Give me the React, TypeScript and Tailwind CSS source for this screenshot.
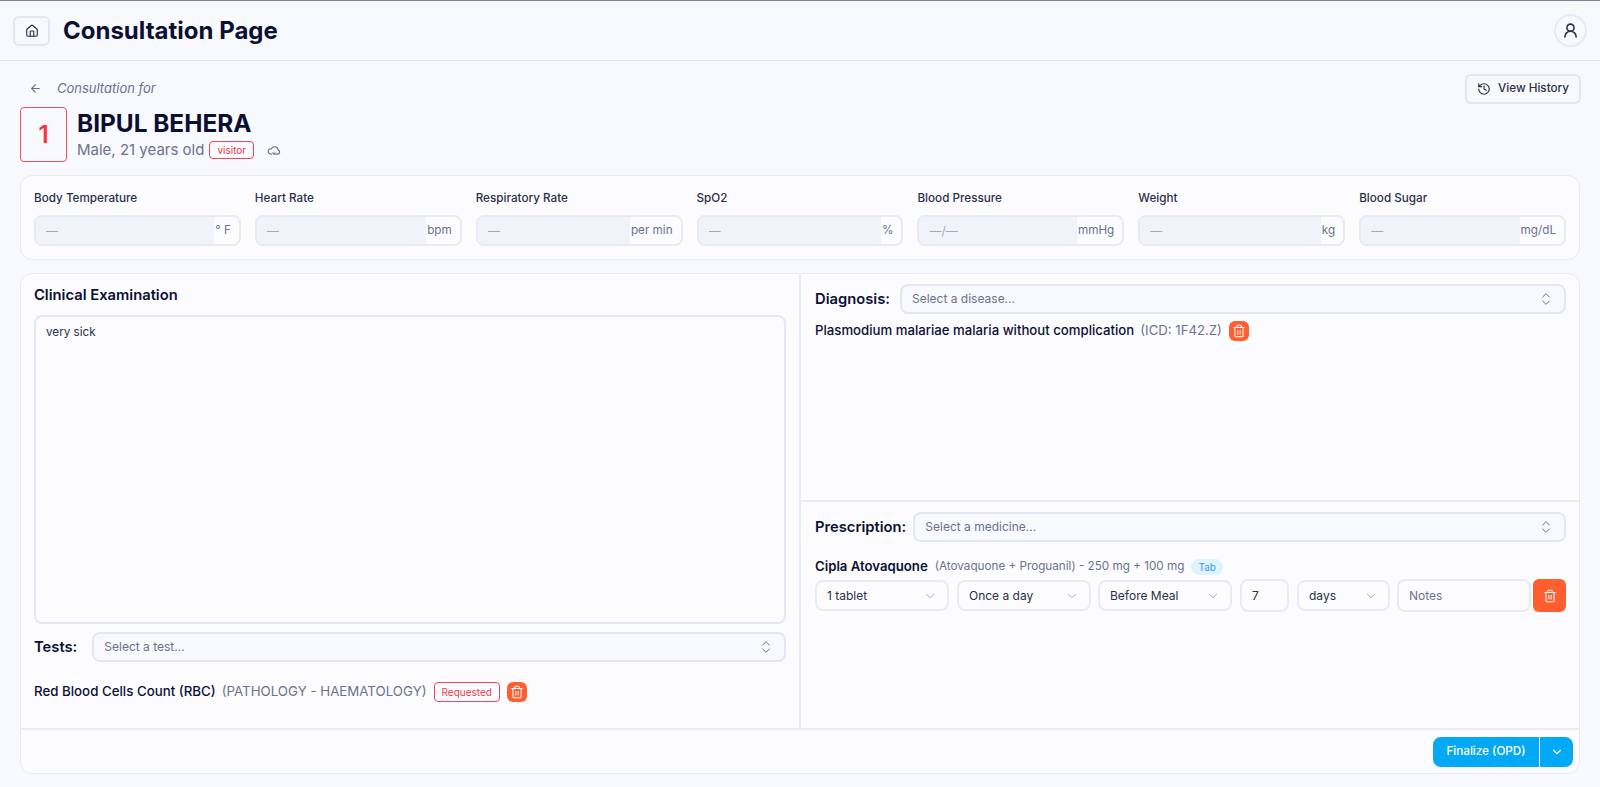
import { ArrowLeft, ChevronDown, ChevronsUpDown, History, House, Trash2, UserRound } from 'lucide-react';

const VITALS = [
  { label: 'Body Temperature', placeholder: '—', unit: '° F' },
  { label: 'Heart Rate', placeholder: '—', unit: 'bpm' },
  { label: 'Respiratory Rate', placeholder: '—', unit: 'per min' },
  { label: 'SpO2', placeholder: '—', unit: '%' },
  { label: 'Blood Pressure', placeholder: '—/—', unit: 'mmHg' },
  { label: 'Weight', placeholder: '—', unit: 'kg' },
  { label: 'Blood Sugar', placeholder: '—', unit: 'mg/dL' },
];

function Combo({ text, className }: { text: string; className?: string }) {
  return (
    <button className={`flex h-[30px] items-center justify-between rounded-lg border-2 border-[#e4e7f2] bg-[#f8f9fc] pl-[10px] pr-[10px] text-xs text-[#6b7190] ${className ?? ''}`}>
      <span>{text}</span>
      <ChevronsUpDown className="h-4 w-4 text-[#6b7190]" strokeWidth={1.5} />
    </button>
  );
}

function Dropdown({ text, className }: { text: string; className?: string }) {
  return (
    <button className={`flex h-[31px] items-center justify-between rounded-lg border-2 border-[#e8eaf4] bg-[#fcfcfe] pl-[10px] pr-[10px] text-xs text-[#2a2f4a] ${className ?? ''}`}>
      <span>{text}</span>
      <ChevronDown className="h-[14px] w-[14px] text-[#9a9fb5]" strokeWidth={1.5} />
    </button>
  );
}

function TrashButton({ className }: { className?: string }) {
  return (
    <button className={`flex items-center justify-center rounded-md bg-[#ff5f2e] text-white ${className ?? ''}`}>
      <Trash2 className="h-[14px] w-[14px]" strokeWidth={1.75} />
    </button>
  );
}

export default function App() {
  return (
    <div className="flex h-[787px] w-[1600px] flex-col overflow-hidden border-t border-[#85839a] bg-[#f8f9fc] font-['Inter',sans-serif] text-[#0b1033]">
      {/* Header */}
      <header className="flex h-[60px] shrink-0 items-center justify-between border-b border-[#e4e7f0] pl-[13px] pr-[13px]">
        <div className="flex items-center gap-[13px]">
          <button className="flex h-[30px] w-[37px] items-center justify-center rounded-md border-2 border-[#e4e7f2] bg-[#f8f9fc]">
            <House className="h-[14px] w-[14px] text-[#2a2f4a]" strokeWidth={2} />
          </button>
          <h1 className="text-2xl font-bold">Consultation Page</h1>
        </div>
        <button className="flex h-[33px] w-[33px] items-center justify-center rounded-full border-2 border-[#e8eaf4]">
          <UserRound className="h-[17px] w-[17px] text-[#2a2f4a]" strokeWidth={2.25} />
        </button>
      </header>

      <main className="flex min-h-0 flex-1 flex-col px-5 pt-3">
        {/* Patient */}
        <div className="flex justify-between">
          <div>
            <div className="flex h-[31px] items-center gap-[15px] pl-[9px]">
              <ArrowLeft className="h-[13px] w-[13px] text-[#6b7190]" strokeWidth={2} />
              <span className="text-[13px] italic text-[#6b7190]">Consultation for</span>
            </div>
            <div className="mt-[3px] flex gap-[10px]">
              <div className="flex h-[55px] w-[47px] items-center justify-center rounded border border-[#f0525f] pt-px text-2xl font-semibold text-[#fb2f40]">1</div>
              <div>
                <div className="text-[24.4px] leading-8 font-bold">BIPUL BEHERA</div>
                <div className="flex items-center">
                  <span className="text-[15px] text-[#6b7190]">Male, 21 years old</span>
                  <span className="ml-[5px] flex h-[18px] items-center rounded border border-[#ec4a58] px-[7px] text-[10px] text-[#e8394a]">visitor</span>
                  <svg viewBox="0 0 24 24" fill="none" stroke="currentColor" strokeWidth="2" strokeLinecap="round" strokeLinejoin="round" className="ml-[13px] h-[14px] w-[14px] text-[#6b7190]">
                    <path d="M8 19H6.5a4.5 4.5 0 1 1 1-8.9 6 6 0 0 1 11.5 2 3.5 3.5 0 0 1-1 6.9H15" />
                    <path d="M10 17l2 2.5L14 17" />
                  </svg>
                </div>
              </div>
            </div>
          </div>
          <button className="-mr-px mt-px flex h-[30px] items-center gap-[7px] rounded-md border-2 border-[#e4e7f2] bg-[#f8f9fc] pr-[10px] pl-[10px] text-[11.7px] font-medium text-[#2a2f4a]">
            <History className="h-[14px] w-[14px]" strokeWidth={2} />
            View History
          </button>
        </div>

        {/* Vitals */}
        <section className="mt-[13px] grid h-[85px] shrink-0 grid-cols-7 gap-[14px] rounded-xl border border-[#e8eaf4] bg-[#fcfcfe] px-[13px] pt-[14px]">
          {VITALS.map((v) => (
            <div key={v.label}>
              <div className="text-[11.7px] leading-4 font-medium text-[#2a2f4a]">{v.label}</div>
              <div className="mt-[9px] flex h-[31px] overflow-hidden rounded-lg border-2 border-[#e8eaf4] bg-[#fcfcfe]">
                <input
                  placeholder={v.placeholder}
                  className="w-0 min-w-0 flex-1 bg-[#f1f3fa] pl-[10px] text-xs outline-none placeholder:text-[#a3a8bd]"
                />
                <span className="flex items-center pr-[8px] pl-px text-[11.7px] text-[#6b7190]">{v.unit}</span>
              </div>
            </div>
          ))}
        </section>

        {/* Main card */}
        <section className="mt-[13px] flex h-[501px] shrink-0 flex-col rounded-xl border border-[#e8eaf4] bg-[#fcfcfe]">
          <div className="grid min-h-0 flex-1 grid-cols-[780px_1fr] border-b-2 border-[#e8eaf4]">
            {/* Left column */}
            <div className="flex flex-col border-r-2 border-[#e8eaf4] px-[13px] pt-[11px]">
              <h2 className="text-[14.75px] leading-5 font-semibold">Clinical Examination</h2>
              <textarea
                defaultValue="very sick"
                className="mt-[10px] h-[309px] w-full resize-none rounded-lg border-2 border-[#e4e7f2] bg-[#fcfcfe] px-[10px] py-[7px] text-[11.7px] text-[#2a2f4a] outline-none"
              />
              <div className="mt-[8px] flex items-center gap-[15px]">
                <span className="text-[14.75px] font-semibold">Tests:</span>
                <Combo text="Select a test..." className="flex-1" />
              </div>
              <div className="mt-[20px] flex items-center">
                <span className="text-[13.3px] font-medium">Red Blood Cells Count (RBC)</span>
                <span className="ml-[6px] text-[13.3px] text-[#6b7190]">(PATHOLOGY - HAEMATOLOGY)</span>
                <span className="ml-[7px] flex h-5 items-center rounded border border-[#ec4a58] px-[7px] text-[10px] text-[#e8394a]">Requested</span>
                <TrashButton className="ml-[7px] h-5 w-5" />
              </div>
            </div>

            {/* Right column */}
            <div className="flex flex-col">
              <div className="h-[228px] border-b-2 border-[#e8eaf4] pt-[10px] pr-[13px] pl-[14px]">
                <div className="flex items-center gap-[10px]">
                  <span className="text-[14.75px] font-semibold">Diagnosis:</span>
                  <Combo text="Select a disease..." className="flex-1" />
                </div>
                <div className="mt-[7px] flex items-center">
                  <span className="text-[13.2px] font-medium">Plasmodium malariae malaria without complication</span>
                  <span className="ml-[6px] text-[13.2px] text-[#6b7190]">(ICD: 1F42.Z)</span>
                  <TrashButton className="ml-[7px] h-5 w-5" />
                </div>
              </div>
              <div className="pt-[10px] pr-[13px] pl-[14px]">
                <div className="flex items-center gap-[7px]">
                  <span className="text-[14.75px] font-semibold">Prescription:</span>
                  <Combo text="Select a medicine..." className="flex-1" />
                </div>
                <div className="mt-[15px] flex h-[20px] items-center">
                  <span className="text-[13.2px] font-semibold">Cipla Atovaquone</span>
                  <span className="ml-[7px] text-[11.7px] text-[#6b7190]">(Atovaquone + Proguanil) - 250 mg + 100 mg</span>
                  <span className="ml-[7px] flex h-4 items-center rounded-full bg-[#e0f2fe] px-[7px] text-[10px] text-[#2f9fe8]">Tab</span>
                </div>
                <div className="mt-[2px] flex items-center">
                  <Dropdown text="1 tablet" className="w-[134px]" />
                  <Dropdown text="Once a day" className="ml-2 w-[134px]" />
                  <Dropdown text="Before Meal" className="ml-[7px] w-[134px]" />
                  <input
                    defaultValue="7"
                    className="ml-2 h-[33px] w-[49px] rounded-lg border-2 border-[#e8eaf4] bg-[#fcfcfe] px-[10px] text-xs text-[#2a2f4a] outline-none"
                  />
                  <Dropdown text="days" className="ml-2 w-[93px]" />
                  <input
                    placeholder="Notes"
                    className="ml-[7px] h-[33px] w-[134px] rounded-lg border-2 border-[#e8eaf4] bg-[#fcfcfe] px-[10px] text-xs outline-none placeholder:text-[#6b7190]"
                  />
                  <TrashButton className="ml-[2px] h-[33px] w-[33px]" />
                </div>
              </div>
            </div>
          </div>

          {/* Footer */}
          <div className="flex h-[43px] shrink-0 items-center justify-end pr-[6px]">
            <div className="flex h-[30px] text-[11.7px] font-medium text-white">
              <button className="w-[106px] rounded-l-lg bg-[#03a9f4]">Finalize (OPD)</button>
              <button className="ml-px flex w-[33px] items-center justify-center rounded-r-lg bg-[#03a9f4]">
                <ChevronDown className="h-[14px] w-[14px]" strokeWidth={2} />
              </button>
            </div>
          </div>
        </section>
      </main>
    </div>
  );
}
